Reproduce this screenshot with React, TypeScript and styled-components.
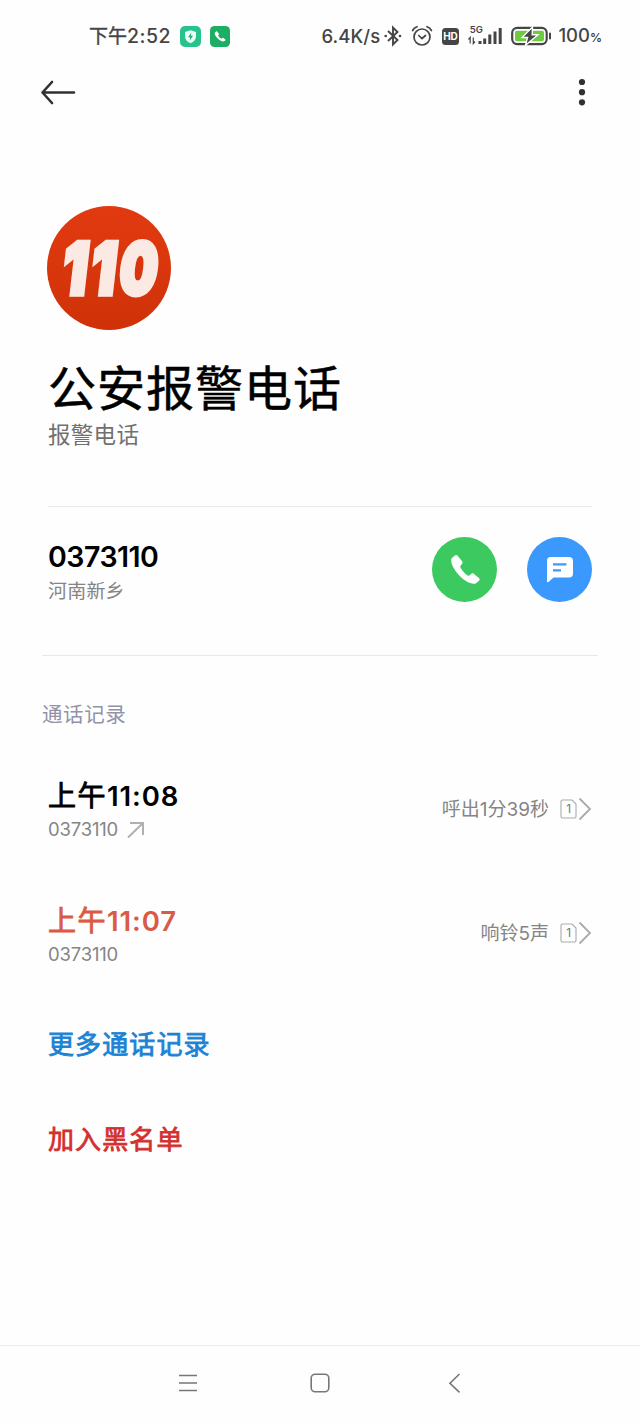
import React from 'react';
import styled, { createGlobalStyle } from 'styled-components';

const GlobalStyle = createGlobalStyle`
  * { box-sizing: border-box; }
  body { margin: 0; background: #fefefe; }
  svg { display: block; flex: none; }
`;

const Screen = styled.div`
  width: 640px;
  height: 1422px;
  display: flex;
  flex-direction: column;
  background: #fefefe;
  font-family: Inter, 'Noto Sans CJK SC', sans-serif;
  color: #000;
  overflow: hidden;
`;

const Text = styled.div<{
  $size: number;
  $line: number;
  $color?: string;
  $weight?: number;
  $stroke?: number;
  $spacing?: number;
}>`
  margin: 0;
  font-size: ${p => p.$size}px;
  line-height: ${p => p.$line}px;
  color: ${p => p.$color ?? '#000'};
  font-weight: ${p => p.$weight ?? 400};
  letter-spacing: ${p => p.$spacing ?? 0}px;
  -webkit-text-stroke: ${p => p.$stroke ?? 0}px currentColor;
  white-space: nowrap;
`;

const Digits = styled.span<{ $size: number; $spacing?: number; $weight?: number }>`
  font-size: ${p => p.$size}px;
  letter-spacing: ${p => p.$spacing ?? 0}px;
  font-weight: ${p => p.$weight ?? 400};
  -webkit-text-stroke: 0;
`;

const StatusBar = styled.header`
  height: 72px;
  padding: 0 38px 0 89px;
  display: flex;
  align-items: center;
  justify-content: space-between;
`;

const StatusGroup = styled.div<{ $gap: number }>`
  display: flex;
  align-items: center;
  gap: ${p => p.$gap}px;
`;

const AppBar = styled.nav`
  height: 40px;
  padding: 0 54px 0 40px;
  display: flex;
  align-items: center;
  justify-content: space-between;
`;

const Profile = styled.section`
  height: 395px;
  margin: 0 48px;
  padding-top: 93.5px;
  border-bottom: 1px solid #e8e8e8;
`;

const Avatar = styled.div`
  width: 124px;
  height: 124px;
  margin: 0 0 31px -1px;
  border-radius: 50%;
  background: linear-gradient(#e23a10, #cf3208);
`;

const NumberRow = styled.section`
  height: 149px;
  margin: 0 42px;
  padding: 30px 5.6px 0 6px;
  display: flex;
  justify-content: space-between;
  border-bottom: 1px solid #e8e8e8;
`;

const Stack = styled.div<{ $top?: number; $gap?: number }>`
  display: flex;
  flex-direction: column;
  gap: ${p => p.$gap ?? 0}px;
  padding-top: ${p => p.$top ?? 0}px;
`;

const Actions = styled.div`
  display: flex;
  gap: 30px;
`;

const RoundButton = styled.button<{ $color: string }>`
  width: 65px;
  height: 65px;
  padding: 0;
  border: 0;
  border-radius: 50%;
  background: ${p => p.$color};
`;

const SectionLabel = styled.h2`
  margin: 44px 0 0 42px;
  height: 30px;
`;

const CallRow = styled.article`
  height: 124.5px;
  padding: 0 48px;
  display: flex;
  justify-content: space-between;
`;

const CallList = styled.section`
  padding-top: 48px;
`;

const CallNumber = styled.div`
  display: flex;
  align-items: center;
  gap: 9px;
`;

const CallDetail = styled.div`
  height: 30px;
  margin-top: 15.8px;
  display: flex;
  align-items: center;
  gap: 11px;
`;

const DetailText = styled(Text)`
  padding-top: 2px;
`;

const LinkRow = styled.a<{ $height: number }>`
  display: block;
  height: ${p => p.$height}px;
  padding-left: 48px;
`;

const NavBar = styled.footer`
  height: 77px;
  margin-top: auto;
  padding: 0 0 2px 178px;
  border-top: 1px solid #ececec;
  display: grid;
  grid-template-columns: 132px 138px 20px;
  align-items: center;
`;

const ShieldBadge = () => (
  <svg width="21" height="21" viewBox="0 0 21 21">
    <rect width="21" height="21" rx="5" fill="#25c48b" />
    <path d="M10.5 4.3 16 6v4.5c0 3-2.2 5.200-5.500 6.700C7.200 15.700 5 13.500 5 10.500V6Z" fill="#f1fff9" />
    <path d="M11.500 6.500 8 11.300h2.200l-.6 3.500 3.400-5h-2.200Z" fill="#25a878" />
  </svg>
);

const PHONE =
  'M5.100 2.400 2.900 4.100C1.600 5.300 2.300 9.300 6.800 14.300c4.600 5.100 10.400 7.800 13.600 6.900l2.400-1.800c.6-.5.600-1.200.1-1.700l-4-3c-.6-.4-1.200-.4-1.700 0l-2 1.500c-2.200-.8-5.300-4-6.300-6.400l1.500-1.900c.4-.5.400-1 .1-1.500L7.100 2.600c-.5-.7-1.300-.8-2-.2Z';

const PhoneBadge = () => (
  <svg width="20" height="21" viewBox="0 0 20 21">
    <rect width="20" height="21" rx="4.500" fill="#1cae62" />
    <path d={PHONE} transform="translate(3.500 4.300) scale(.52)" fill="#fff" />
  </svg>
);

const Bluetooth = () => (
  <svg width="18" height="22" viewBox="0 0 18 22" fill="none" stroke="#454545" strokeWidth="1.900">
    <path d="m4 6 9.500 9L9 19.500v-17L13.500 7 4 16" />
    <circle cx="1.700" cy="11" r="1.300" fill="#454545" stroke="none" />
    <circle cx="16" cy="11" r="1.300" fill="#454545" stroke="none" />
  </svg>
);

const Alarm = () => (
  <svg width="22" height="22" viewBox="0 0 22 22" fill="none" stroke="#454545" strokeWidth="1.700" strokeLinecap="round">
    <circle cx="11" cy="12" r="8" />
    <path d="m7.800 10.500 3.200 3 3.500-3M1.600 5.500Q3 2.700 6 1.700M20.400 5.500Q19 2.700 16 1.700" />
  </svg>
);

const HdBadge = () => (
  <svg width="17" height="17" viewBox="0 0 17 17">
    <rect width="17" height="17" rx="3.500" fill="#454545" />
    <text x="8.500" y="12.300" textAnchor="middle" fontFamily="Inter" fontWeight="700" fontSize="10" fill="#fff">HD</text>
  </svg>
);

const Signal = () => (
  <svg width="34" height="22" viewBox="0 0 34 22">
    <text x="1.800" y="8" fontFamily="Inter" fontWeight="600" fontSize="9.500" fill="#454545">5G</text>
    <path d="M2.200 18.500v-6L.5 14.500M5.300 12.500v6l1.700-2" fill="none" stroke="#454545" strokeWidth="1.200" />
    <path d="M12 16v3M16.700 13.500V19M21.800 9.500V19M27 6.500V19M32.200 3V19" stroke="#454545" strokeWidth="3" fill="none" />
  </svg>
);

const Battery = () => (
  <svg width="41" height="20" viewBox="0 0 41 20">
    <rect x="1.200" y="1.900" width="34.500" height="16.200" rx="5" fill="#fff" stroke="#454545" strokeWidth="2.200" />
    <rect x="4" y="4.700" width="29" height="10.600" rx="2" fill="#6ccb3e" />
    <path d="M39 7.500v5" stroke="#454545" strokeWidth="2" strokeLinecap="round" />
    <path d="M21.500 1 11 11.500h5.500l-2 7.800L27 8.700h-5.800Z" fill="#454545" stroke="#fff" strokeWidth="1.400" />
  </svg>
);

const BackArrow = () => (
  <svg width="36" height="26" viewBox="0 0 36 26" fill="none" stroke="#303030" strokeWidth="2.600" strokeLinecap="round" strokeLinejoin="round">
    <path d="M34 13.500H2.500M12 3 2.500 13.500 12 24" />
  </svg>
);

const MoreDots = () => (
  <svg width="8" height="28" viewBox="0 0 8 28" fill="#303030">
    <circle cx="4" cy="4" r="3.100" />
    <circle cx="4" cy="14.200" r="3.100" />
    <circle cx="4" cy="24.300" r="3.100" />
  </svg>
);

const AvatarNumber = () => (
  <svg width="124" height="124" viewBox="0 0 124 124" fontFamily="Inter" fontWeight="900" fontSize="71" fill="#fbeae4" stroke="#fbeae4" strokeWidth="5.500">
    <g transform="translate(0 87.500) skewX(-6.500)">
      <text transform="translate(13.500 0) scale(.76 1)">1</text>
      <text transform="translate(42 0) scale(.76 1)">1</text>
      <text transform="translate(70.500 0) scale(.74 1)">0</text>
    </g>
  </svg>
);

const CallIcon = () => (
  <svg width="65" height="65" viewBox="0 0 65 65">
    <path d={PHONE} transform="translate(16 15) scale(1.360 1.480)" fill="#fff" />
  </svg>
);

const MessageIcon = () => (
  <svg width="65" height="65" viewBox="0 0 65 65">
    <path d="M23.500 20h18.500q4 0 4 4v12.500q0 4-4 4H26.500l-5 4.500q-1.500 1-1.500-1V24q0-4 3.500-4Z" fill="#fff" />
    <path d="M26 27.300h13.500M26 33.300h8" stroke="#3b98fc" strokeWidth="2.200" />
  </svg>
);

const OutgoingArrow = () => (
  <svg width="18" height="18" viewBox="0 0 18 18" fill="none" stroke="#b0b0b0" strokeWidth="2">
    <path d="M1 16.500 16 2M3 2h13v12" />
  </svg>
);

const SimChevron = () => (
  <svg width="32" height="24" viewBox="0 0 32 24" fill="none" stroke="#aaa">
    <path d="M2.500 3h9.500l4 4v12.500q0 1.500-1.500 1.500h-12Q1 21 1 19.500v-15Q1 3 2.500 3Z" strokeWidth="1.100" />
    <path d="m19.500 1.500 10.500 10.500-10.500 10.500" strokeWidth="1.800" />
    <text x="8.700" y="16.300" textAnchor="middle" fontFamily="Inter" fontSize="12" fill="#777" stroke="none">1</text>
  </svg>
);

const MenuIcon = () => (
  <svg width="20" height="20" viewBox="0 0 20 20" stroke="#777" strokeWidth="1.500">
    <path d="M1 2.500h18M1 10h18M1 17.500h18" />
  </svg>
);

const HomeIcon = () => (
  <svg width="20" height="20" viewBox="0 0 20 20" fill="none" stroke="#777" strokeWidth="1.600">
    <rect x="1.200" y="1.200" width="17.600" height="17.600" rx="4" />
  </svg>
);

const PrevIcon = () => (
  <svg width="14" height="20" viewBox="0 0 14 20" fill="none" stroke="#777" strokeWidth="1.600">
    <path d="M11.500 1 2 10.300l9.500 9" />
  </svg>
);

export default function App() {
  return (
    <Screen>
      <GlobalStyle />
      <StatusBar>
        <StatusGroup $gap={9}>
          <Text $size={19} $line={28} $color="#454545" $stroke={0.4}>
            下午<Digits $size={19.5} $weight={500} $spacing={0.5}>2:52</Digits>
          </Text>
          <ShieldBadge />
          <PhoneBadge />
        </StatusGroup>
        <StatusGroup $gap={9}>
          <StatusGroup $gap={4}>
            <Text $size={18.5} $line={28} $color="#454545" $weight={500} $spacing={0.1}>6.4K/s</Text>
            <Bluetooth />
          </StatusGroup>
          <Alarm />
          <HdBadge />
          <Signal />
          <StatusGroup $gap={6}>
            <Battery />
            <Text $size={18.5} $line={28} $color="#454545" $weight={500}>
              100<Digits $size={12} $weight={600}>%</Digits>
            </Text>
          </StatusGroup>
        </StatusGroup>
      </StatusBar>
      <AppBar>
        <BackArrow />
        <MoreDots />
      </AppBar>
      <Profile>
        <Avatar>
          <AvatarNumber />
        </Avatar>
        <Text as="h1" $size={48} $line={56} $stroke={0.5} $spacing={1}>公安报警电话</Text>
        <Text $size={22.5} $line={36} $color="#707070" $spacing={0.3}>报警电话</Text>
      </Profile>
      <NumberRow>
        <Stack $top={1}>
          <Text $size={28.5} $line={38} $weight={600} $spacing={-0.5}>0373110</Text>
          <Text $size={19} $line={31} $color="#858585" $spacing={0.2}>河南新乡</Text>
        </Stack>
        <Actions>
          <RoundButton $color="#3bc960"><CallIcon /></RoundButton>
          <RoundButton $color="#3b98fc"><MessageIcon /></RoundButton>
        </Actions>
      </NumberRow>
      <SectionLabel>
        <Text $size={20.5} $line={30} $color="#9293a8" $spacing={0.6}>通话记录</Text>
      </SectionLabel>
      <CallList>
        <CallRow>
          <Stack $gap={1}>
            <Text $size={28} $line={36} $stroke={0.9} $spacing={1.5}>
              上午<Digits $size={27.5} $weight={600} $spacing={0.9}>11:08</Digits>
            </Text>
            <CallNumber>
              <Text $size={18.5} $line={29} $color="#858585" $spacing={-0.2}>0373110</Text>
              <OutgoingArrow />
            </CallNumber>
          </Stack>
          <CallDetail>
            <DetailText $size={19} $line={30} $color="#858585">呼出1分39秒</DetailText>
            <SimChevron />
          </CallDetail>
        </CallRow>
        <CallRow>
          <Stack $gap={1}>
            <Text $size={28} $line={36} $color="#d95b45" $stroke={0.9} $spacing={1.5}>
              上午<Digits $size={27.5} $weight={600} $spacing={0.9}>11:07</Digits>
            </Text>
            <Text $size={18.5} $line={29} $color="#858585" $spacing={-0.2}>0373110</Text>
          </Stack>
          <CallDetail>
            <DetailText $size={19} $line={30} $color="#858585">响铃5声</DetailText>
            <SimChevron />
          </CallDetail>
        </CallRow>
      </CallList>
      <LinkRow $height={95}>
        <Text $size={26} $line={36} $color="#1b82d4" $stroke={0.8} $spacing={1.1}>更多通话记录</Text>
      </LinkRow>
      <LinkRow $height={60}>
        <Text $size={26} $line={36} $color="#d3302f" $stroke={0.8} $spacing={1.1}>加入黑名单</Text>
      </LinkRow>
      <NavBar>
        <MenuIcon />
        <HomeIcon />
        <PrevIcon />
      </NavBar>
    </Screen>
  );
}
